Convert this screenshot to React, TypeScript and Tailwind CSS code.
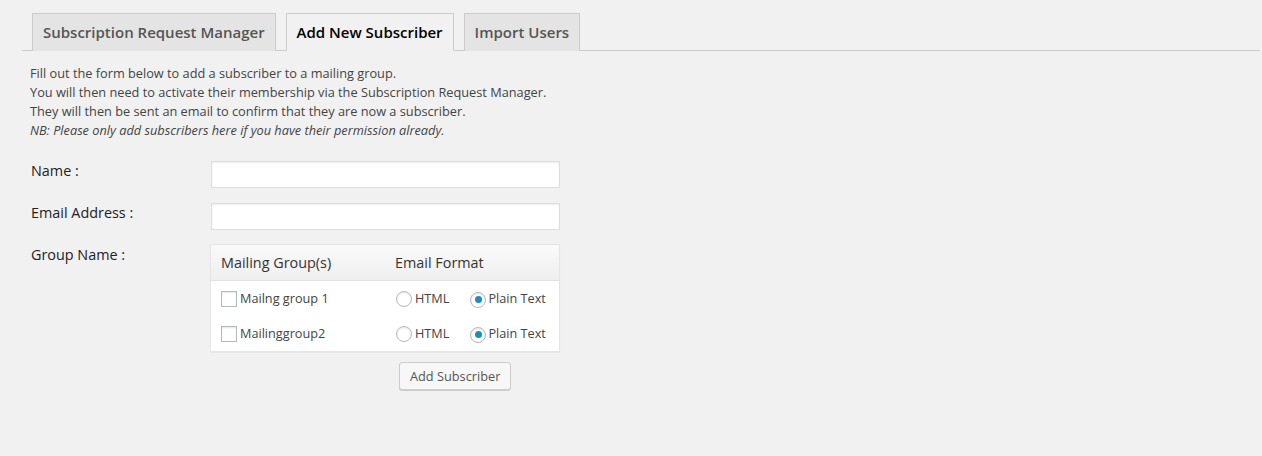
import React from "react";

function Radio({ checked }: { checked?: boolean }) {
  return (
    <span className="inline-flex h-[16px] w-[16px] items-center justify-center rounded-full border border-[#b4b9be] bg-white shadow-[inset_0_1px_2px_rgba(0,0,0,0.1)]">
      {checked && <span className="h-[7px] w-[7px] rounded-full bg-[#1e8cbe]" />}
    </span>
  );
}

function Checkbox() {
  return <span className="inline-block h-[16px] w-[16px] border border-[#b4b9be] bg-white shadow-[inset_0_1px_2px_rgba(0,0,0,0.1)]" />;
}

function GroupRow({ name }: { name: string }) {
  return (
    <div className="flex h-[35px] items-center text-[12.7px]">
      <div className="flex w-[175px] items-center gap-[3px] pl-[10px]">
        <Checkbox />
        <span>{name}</span>
      </div>
      <div className="flex items-center pl-[10px]">
        <Radio />
        <span className="ml-[3px]">HTML</span>
        <span className="ml-[21px]"><Radio checked /></span>
        <span className="ml-[2px]">Plain Text</span>
      </div>
    </div>
  );
}

export default function App() {
  return (
    <div
      className="h-[456px] w-full bg-[#f1f1f1] text-[12.75px] leading-[19px] text-[#444]"
      style={{ fontFamily: '"Open Sans", "Noto Sans", sans-serif' }}
    >
      <div className="pl-[22px] pr-[2px] pt-[13px]">
        <div className="flex gap-[10px] border-b border-[#ccc] pl-[10px]">
          <div className="-mb-px flex h-[38px] items-center border border-b-0 border-[#ccc] bg-[#e4e4e4] px-[10px] text-[15px] font-semibold text-[#555]">
            Subscription Request Manager
          </div>
          <div className="-mb-px flex h-[38px] items-center border border-[#ccc] border-b-[#f1f1f1] bg-[#f1f1f1] px-[10px] text-[15px] font-semibold text-black">
            Add New Subscriber
          </div>
          <div className="-mb-px flex h-[38px] items-center border border-b-0 border-[#ccc] bg-[#e4e4e4] px-[10px] text-[15px] font-semibold text-[#555]">
            Import Users
          </div>
        </div>

        <div className="pl-[8px] pt-[13px]">
          <p>Fill out the form below to add a subscriber to a mailing group.</p>
          <p>You will then need to activate their membership via the Subscription Request Manager.</p>
          <p>They will then be sent an email to confirm that they are now a subscriber.</p>
          <p className="italic">NB: Please only add subscribers here if you have their permission already.</p>

          <div className="mt-[21px] flex flex-col">
            <div className="flex">
              <label className="w-[181px] pl-[1px] text-[14.4px] text-[#222]">Name :</label>
              <div className="h-[27px] w-[349px] border border-[#ddd] bg-white shadow-[inset_0_1px_2px_rgba(0,0,0,0.07)]" />
            </div>
            <div className="mt-[15px] flex">
              <label className="w-[181px] pl-[1px] text-[14.4px] text-[#222]">Email Address :</label>
              <div className="h-[27px] w-[349px] border border-[#ddd] bg-white shadow-[inset_0_1px_2px_rgba(0,0,0,0.07)]" />
            </div>
            <div className="mt-[14px] flex">
              <label className="w-[180px] pl-[1px] pt-[1px] text-[14.4px] text-[#222]">Group Name :</label>
              <div>
                <div className="w-[350px] border border-[#e5e5e5] bg-white shadow-[0_1px_1px_rgba(0,0,0,0.04)]">
                  <div className="flex h-[36px] items-center border-b border-[#e1e1e1] bg-gradient-to-b from-[#fafafa] to-[#efefef] text-[14.4px] text-[#333]">
                    <div className="w-[175px] pl-[10px]">Mailing Group(s)</div>
                    <div className="pl-[9px]">Email Format</div>
                  </div>
                  <GroupRow name="Mailng group 1" />
                  <GroupRow name="Mailinggroup2" />
                </div>
                <button className="ml-[189px] mt-[10px] h-[28px] rounded-[3px] border border-[#ccc] bg-[#f7f7f7] px-[10px] text-[12.75px] text-[#555] shadow-[0_1px_0_#ccc]">
                  Add Subscriber
                </button>
              </div>
            </div>
          </div>
        </div>
      </div>
    </div>
  );
}
